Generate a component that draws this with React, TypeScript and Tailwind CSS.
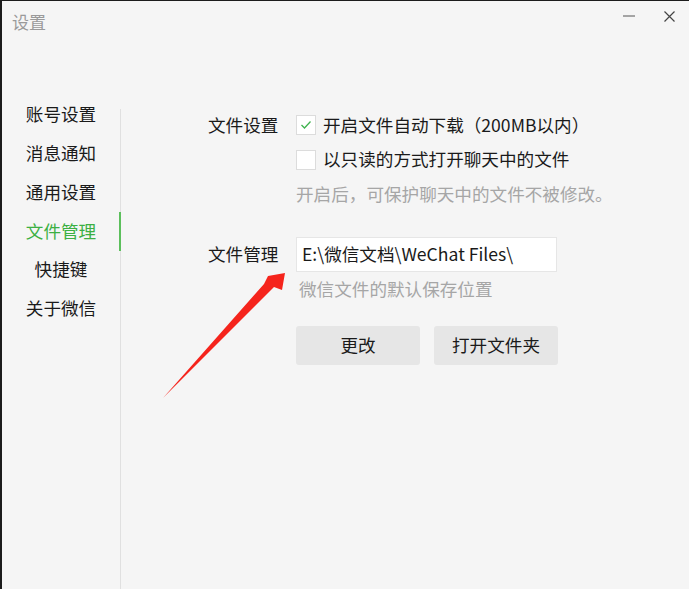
import { useState } from "react"

const menu = ["账号设置", "消息通知", "通用设置", "文件管理", "快捷键", "关于微信"]

function CheckBox({ checked }: { checked: boolean }) {
  return (
    <span className="flex h-[20px] w-[20px] shrink-0 items-center justify-center border border-[#dcdcdc] bg-white">
      {checked && (
        <svg width="12" height="10" viewBox="0 0 12 10" fill="none">
          <path d="M1.5 5 L4.5 8 L10.5 1.5" stroke="#3fb34f" strokeWidth="1.3" />
        </svg>
      )}
    </span>
  )
}

export default function App() {
  const [active] = useState(3)
  return (
    <div
      className="relative flex h-[589px] w-[689px] flex-col overflow-hidden border-l-2 border-t border-[#1c1c1c] bg-[#f5f5f5] text-[17.6px] text-[#1a1a1a]"
      style={{ fontFamily: '"Noto Sans CJK SC", "Noto Sans", sans-serif' }}
    >
      {/* title bar */}
      <div className="flex h-[39px] shrink-0 items-start justify-between">
        <span className="pl-[10px] pt-[8px] text-[17px] text-[#9a9a9a]">设置</span>
        <div className="flex items-center">
          <button className="flex h-[30px] w-[40px] items-center justify-center">
            <svg width="12" height="2" viewBox="0 0 12 2">
              <path d="M0 1 H12" stroke="#555" strokeWidth="1" />
            </svg>
          </button>
          <button className="flex h-[30px] w-[40px] items-center justify-center">
            <svg width="11" height="11" viewBox="0 0 11 11">
              <path d="M0.5 0.5 L10.5 10.5 M10.5 0.5 L0.5 10.5" stroke="#444" strokeWidth="1.2" />
            </svg>
          </button>
        </div>
      </div>

      <div className="flex flex-1">
        {/* sidebar */}
        <div className="w-[118px] shrink-0 pt-[55px]">
          {menu.map((m, i) => (
            <div
              key={m}
              className={`flex h-[38.8px] items-center justify-center ${i === active ? "text-[#3cb043]" : ""}`}
            >
              {m}
            </div>
          ))}
        </div>
        <div className="relative mt-[69px] w-px bg-[#e0e0e0]">
          <div className="absolute left-[-1px] top-[103px] h-[39px] w-[2px] bg-[#5cbf5c]" />
        </div>

        {/* content */}
        <div className="flex flex-col pl-[87px] pt-[68px]">
          <div className="flex">
            <div className="w-[88px] shrink-0 pt-[4px] leading-[26px]">文件设置</div>
            <div className="flex flex-col">
              <label className="flex h-[34px] items-center gap-[7px]">
                <CheckBox checked />
                <span>开启文件自动下载（200MB以内）</span>
              </label>
              <label className="flex h-[35px] items-center gap-[7px]">
                <CheckBox checked={false} />
                <span>以只读的方式打开聊天中的文件</span>
              </label>
              <div className="flex h-[34px] items-center text-[#a6a6a6]">开启后，可保护聊天中的文件不被修改。</div>
            </div>
          </div>

          <div className="mt-[26px] flex">
            <div className="flex h-[35px] w-[88px] shrink-0 items-center">文件管理</div>
            <div className="flex flex-col">
              <div className="flex h-[35px] w-[261px] items-center border border-[#e6e6e6] bg-white pl-[5px]">
                E:\微信文档\WeChat Files\
              </div>
              <div className="ml-[3px] mt-[5px] flex h-[24px] items-center text-[#a6a6a6]">微信文件的默认保存位置</div>
              <div className="mt-[25px] flex gap-[14px]">
                <button className="h-[39px] w-[124px] rounded-[3px] bg-[#e6e6e6]">更改</button>
                <button className="h-[39px] w-[124px] rounded-[3px] bg-[#e6e6e6]">打开文件夹</button>
              </div>
            </div>
          </div>
        </div>
      </div>

      {/* annotation arrow */}
      <svg className="pointer-events-none absolute left-[-2px] top-[-1px]" width="689" height="589" viewBox="0 0 689 589">
        <path d="M163 398 L264 284 L268 276 L285 273 L282 290 L274 287 Z" fill="#f5241c" />
      </svg>
    </div>
  )
}
